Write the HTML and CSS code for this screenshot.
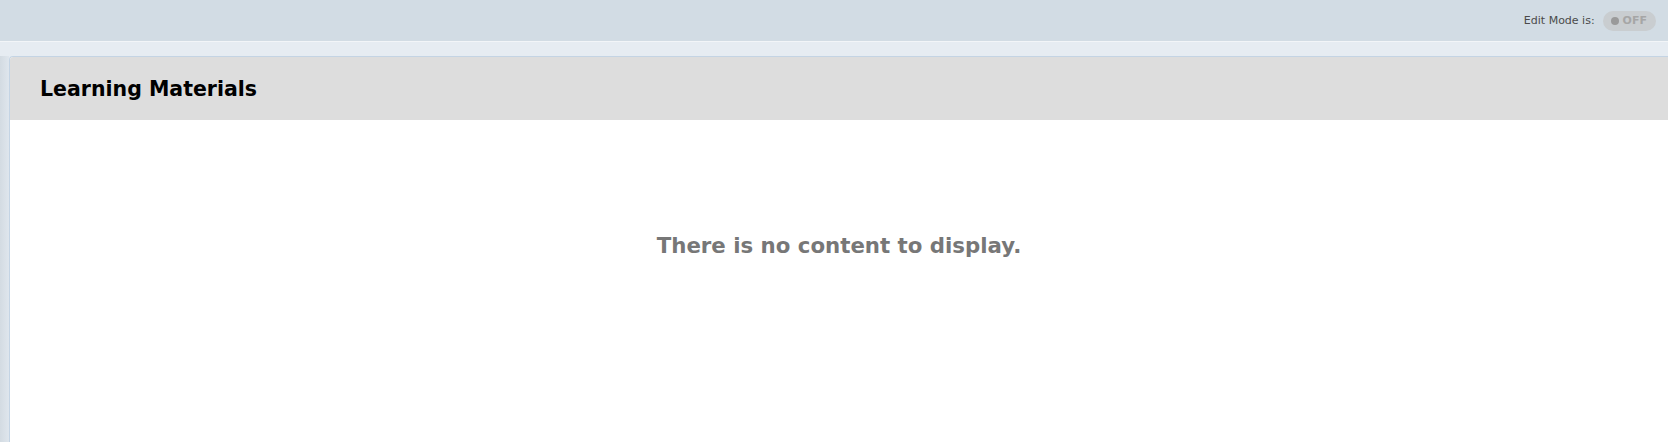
FILE: index.html
```html
<!DOCTYPE html>
<html lang="en">
<head>
    <meta charset="UTF-8">
    <title>Learning Materials</title>
    <link rel="stylesheet" href="styles.css">
</head>
<body>
    <div class="topbar">
        <span class="edit-label">Edit Mode is:</span>
        <span class="toggle"><span class="dot"></span>OFF</span>
    </div>
    <div class="page">
        <div class="panel">
            <div class="panel-header">
                <h1>Learning Materials</h1>
            </div>
            <div class="panel-body">
                <p class="empty">There is no content to display.</p>
            </div>
        </div>
    </div>
</body>
</html>
```

FILE: styles.css
```css
* {
    margin: 0;
    padding: 0;
    box-sizing: border-box;
}
body {
    font-family: "DejaVu Sans", Verdana, sans-serif;
    background: #e6ecf2;
    height: 442px;
    overflow: hidden;
}
.topbar {
    height: 42px;
    background: #d2dce4;
    border-bottom: 1px solid #f2f5f8;
    display: flex;
    align-items: center;
    justify-content: flex-end;
    padding-right: 12px;
    gap: 8px;
}
.edit-label {
    font-size: 11px;
    color: #4a4a4a;
}
.toggle {
    display: flex;
    align-items: center;
    gap: 4px;
    height: 20px;
    padding: 0 9px 0 8px;
    border-radius: 10px;
    background: #c9cdd0;
    color: #a6a6a6;
    font-size: 11px;
    font-weight: bold;
}
.dot {
    width: 8px;
    height: 8px;
    border-radius: 50%;
    background: #9a9a9a;
}
.page {
    margin-top: 14px;
    padding-left: 9px;
    background: linear-gradient(to right, #d3dbe2, #dfe6ed 9px, #e6ecf2 9px);
}
.panel {
    background: #fff;
    border: 1px solid #c4d4e4;
    border-right: none;
    border-radius: 4px 0 0 0;
    height: 400px;
    overflow: hidden;
}
.panel-header {
    height: 63px;
    background: #dddddd;
    display: flex;
    align-items: center;
    padding-left: 30px;
}
.panel-header h1 {
    font-size: 20.5px;
    font-weight: bold;
    color: #000;
}
.panel-body {
    padding-top: 113px;
    text-align: center;
}
.empty {
    font-size: 21.3px;
    font-weight: bold;
    color: #777;
}
```
